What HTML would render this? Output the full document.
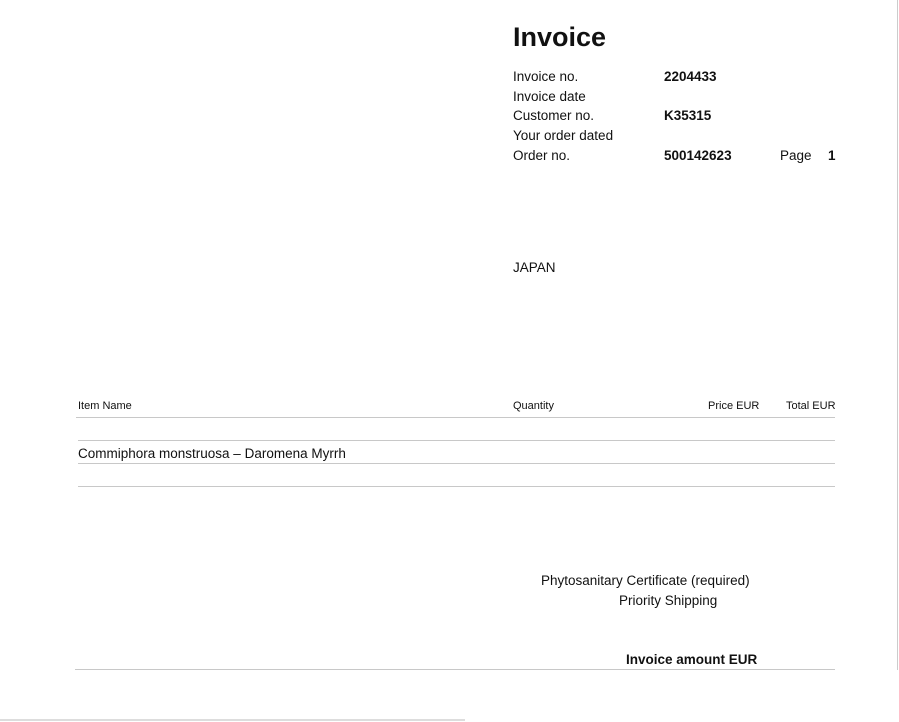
<!DOCTYPE html>
<html><head><meta charset="utf-8"><style>
body{margin:0;width:899px;height:722px;background:#fff;position:relative;overflow:hidden;font-family:"Liberation Sans",sans-serif;color:#111}
.a{position:absolute;white-space:nowrap}
.s{font-size:13.5px}
.b{font-weight:bold}
.n{font-family:"Liberation Sans Narrow","Liberation Sans",sans-serif}
.h{position:absolute;height:1px;background:#c8c8c8}
</style></head><body>
<div class="a b" style="left:513px;top:22px;font-size:27px">Invoice</div>
<div class="a s" style="left:513px;top:69px">Invoice no.</div>
<div class="a s b" style="left:664px;top:69px">2204433</div>
<div class="a s" style="left:513px;top:89px">Invoice date</div>
<div class="a s" style="left:513px;top:108px">Customer no.</div>
<div class="a s b" style="left:664px;top:108px">K35315</div>
<div class="a s" style="left:513px;top:128px">Your order dated</div>
<div class="a s" style="left:513px;top:148px">Order no.</div>
<div class="a s b" style="left:664px;top:148px">500142623</div>
<div class="a s" style="left:780px;top:148px">Page</div>
<div class="a s b" style="left:828px;top:148px">1</div>
<div class="a s" style="left:513px;top:260px">JAPAN</div>
<div class="a n" style="left:78px;top:400px;font-size:11px">Item Name</div>
<div class="a n" style="left:513px;top:400px;font-size:11px">Quantity</div>
<div class="a n" style="left:708px;top:400px;font-size:11px">Price EUR</div>
<div class="a n" style="left:786px;top:400px;font-size:11px">Total EUR</div>
<div class="h" style="left:76px;top:417px;width:759px"></div>
<div class="h" style="left:78px;top:440px;width:757px"></div>
<div class="a n" style="left:78px;top:446px;font-size:13.5px">Commiphora monstruosa – Daromena Myrrh</div>
<div class="h" style="left:78px;top:463px;width:757px"></div>
<div class="h" style="left:78px;top:486px;width:757px"></div>
<div class="a n" style="left:541px;top:573px;font-size:13.5px">Phytosanitary Certificate (required)</div>
<div class="a n" style="left:619px;top:593px;font-size:13.5px">Priority Shipping</div>
<div class="a n b" style="left:626px;top:652px;font-size:13.5px">Invoice amount EUR</div>
<div class="h" style="left:75px;top:669px;width:760px"></div>
<div class="a" style="left:897px;top:0;width:1px;height:670px;background:#ccc"></div>
<div class="a" style="left:0;top:719px;width:465px;height:2px;background:#ddd"></div>
</body></html>
